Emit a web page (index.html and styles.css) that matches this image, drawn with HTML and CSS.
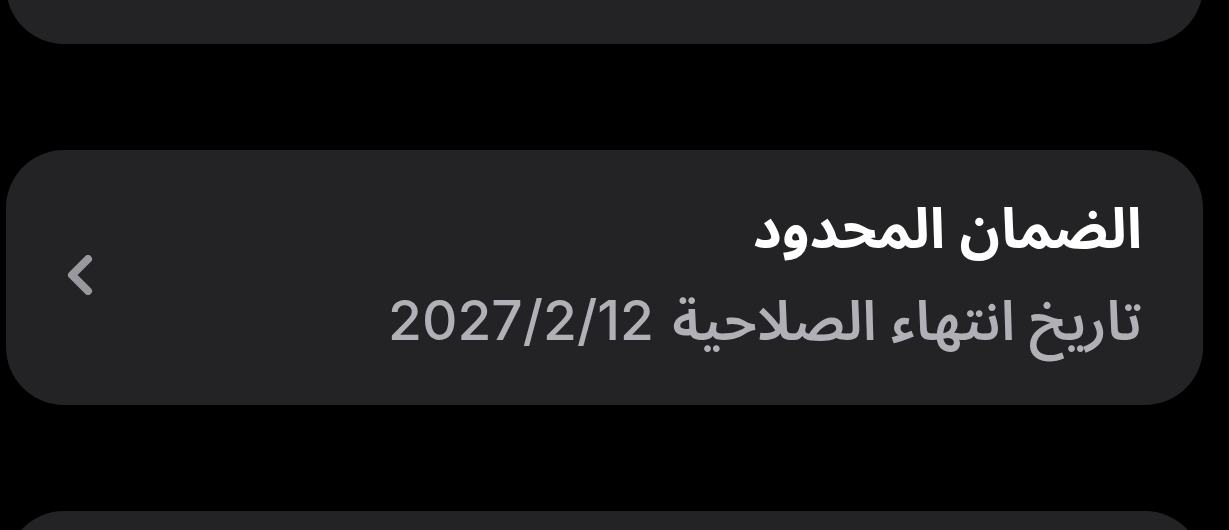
FILE: index.html
```html
<!DOCTYPE html>
<html lang="ar" dir="rtl">
<head>
<meta charset="utf-8">
<link rel="stylesheet" href="styles.css">
</head>
<body>
<div class="list">
  <div class="card"></div>
  <div class="card row">
    <div class="text">
      <div class="title">الضمان المحدود</div>
      <div class="subtitle">تاريخ انتهاء الصلاحية <span class="num">2027/2/12</span></div>
    </div>
    <svg class="chev" width="26" height="40" viewBox="0 0 26 40">
      <path d="M21 4 L5 20 L21 36" fill="none" stroke="#98989e" stroke-width="8" stroke-linecap="round" stroke-linejoin="round"/>
    </svg>
  </div>
  <div class="card"></div>
</div>
</body>
</html>
```
FILE: styles.css
```css
html, body {
  margin: 0;
  padding: 0;
  background: #000;
  height: 100%;
  overflow: hidden;
}
.list {
  display: flex;
  flex-direction: column;
  gap: 106px;
  margin-top: -211px;
  padding-left: 6px;
  padding-right: 26px;
}
.card {
  height: 255px;
  width: 1197px;
  background: #232325;
  border-radius: 58px;
  box-sizing: border-box;
  flex-shrink: 0;
}
.row {
  display: flex;
  flex-direction: row;
  align-items: center;
  justify-content: space-between;
  padding: 0 61px 0 61px;
}
.text {
  display: flex;
  flex-direction: column;
  gap: 28px;
  margin-top: -2px;
  font-family: "Noto Sans Arabic", Inter, "DejaVu Sans", sans-serif;
}
.title {
  color: #ffffff;
  font-size: 56px;
  font-weight: 700;
  line-height: 62px;
}
.subtitle {
  color: #b0b0b6;
  font-size: 55px;
  font-weight: 600;
  line-height: 62px;
}
.num {
  font-family: Inter, sans-serif;
  font-size: 55px;
  font-weight: 500;
  margin-right: 4px;
}
.chev {
  display: block;
  margin-top: -5px;
}
```
